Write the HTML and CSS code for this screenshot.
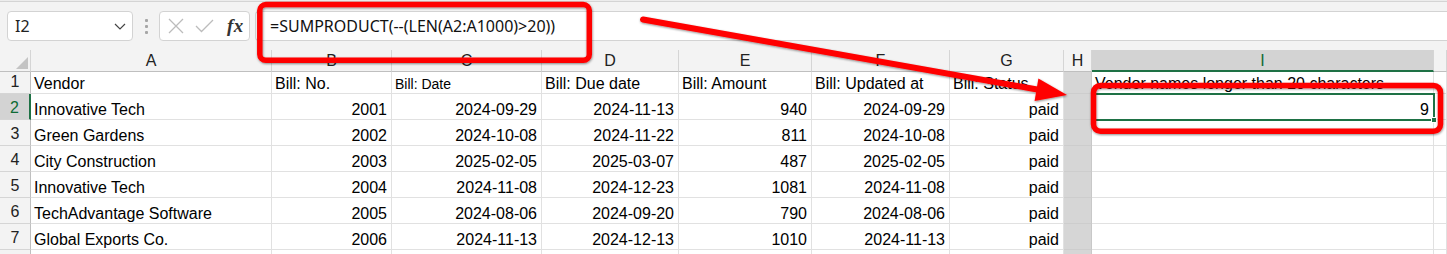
FILE: index.html
```html
<!DOCTYPE html>
<html>
<head>
<meta charset="utf-8">
<link rel="stylesheet" href="styles.css">
</head>
<body>
<div class="app">
  <div class="ribbon-edge"></div>
  <div class="fbar">
    <div class="namebox">
      <span class="ref">I2</span>
      <svg class="chev" width="12" height="7" viewBox="0 0 12 7"><path d="M1 1 L6 6 L11 1" fill="none" stroke="#444" stroke-width="1.2"/></svg>
    </div>
    <div class="grip"><i></i><i></i><i></i></div>
    <div class="fxbox">
      <svg width="16" height="16" viewBox="0 0 16 16"><path d="M1 1 L15 15 M15 1 L1 15" stroke="#bcbcbc" stroke-width="1.3" fill="none"/></svg>
      <svg width="19" height="14" viewBox="0 0 19 14"><path d="M1 7 L6.5 12.5 L18 1" stroke="#bcbcbc" stroke-width="1.3" fill="none"/></svg>
      <span class="fx">fx</span>
    </div>
    <div class="finput">=SUMPRODUCT(--(LEN(A2:A1000)&gt;20))</div>
  </div>
  <div class="sheet">
    <div class="ch corner"><span class="tri"></span></div>
    <div class="ch">A</div><div class="ch">B</div><div class="ch">C</div><div class="ch">D</div><div class="ch">E</div><div class="ch">F</div><div class="ch">G</div><div class="ch">H</div><div class="ch sel-col">I</div><div class="ch"></div>

    <div class="rh">1</div>
    <div class="c">Vendor</div><div class="c">Bill: No.</div><div class="c small">Bill: Date</div><div class="c">Bill: Due date</div><div class="c">Bill: Amount</div><div class="c">Bill: Updated at</div><div class="c">Bill: Status</div><div class="c hcol"></div><div class="c">Vendor names longer than 20 characters</div><div class="c"></div>

    <div class="rh sel-row">2</div>
    <div class="c">Innovative Tech</div><div class="c r">2001</div><div class="c r">2024-09-29</div><div class="c r">2024-11-13</div><div class="c r">940</div><div class="c r">2024-09-29</div><div class="c r">paid</div><div class="c hcol"></div><div class="c r active">9<span class="handle"></span></div><div class="c"></div>

    <div class="rh">3</div>
    <div class="c">Green Gardens</div><div class="c r">2002</div><div class="c r">2024-10-08</div><div class="c r">2024-11-22</div><div class="c r">811</div><div class="c r">2024-10-08</div><div class="c r">paid</div><div class="c hcol"></div><div class="c"></div><div class="c"></div>

    <div class="rh">4</div>
    <div class="c">City Construction</div><div class="c r">2003</div><div class="c r">2025-02-05</div><div class="c r">2025-03-07</div><div class="c r">487</div><div class="c r">2025-02-05</div><div class="c r">paid</div><div class="c hcol"></div><div class="c"></div><div class="c"></div>

    <div class="rh">5</div>
    <div class="c">Innovative Tech</div><div class="c r">2004</div><div class="c r">2024-11-08</div><div class="c r">2024-12-23</div><div class="c r">1081</div><div class="c r">2024-11-08</div><div class="c r">paid</div><div class="c hcol"></div><div class="c"></div><div class="c"></div>

    <div class="rh">6</div>
    <div class="c">TechAdvantage Software</div><div class="c r">2005</div><div class="c r">2024-08-06</div><div class="c r">2024-09-20</div><div class="c r">790</div><div class="c r">2024-08-06</div><div class="c r">paid</div><div class="c hcol"></div><div class="c"></div><div class="c"></div>

    <div class="rh">7</div>
    <div class="c">Global Exports Co.</div><div class="c r">2006</div><div class="c r">2024-11-13</div><div class="c r">2024-12-13</div><div class="c r">1010</div><div class="c r">2024-11-13</div><div class="c r">paid</div><div class="c hcol"></div><div class="c"></div><div class="c"></div>

    <div class="rh"></div>
    <div class="c"></div><div class="c"></div><div class="c"></div><div class="c"></div><div class="c"></div><div class="c"></div><div class="c"></div><div class="c hcol"></div><div class="c"></div><div class="c"></div>
  </div>

  <svg class="annot" width="1447" height="254" viewBox="0 0 1447 254">
    <defs>
      <filter id="sh" x="-5%" y="-20%" width="110%" height="140%">
        <feDropShadow dx="0.5" dy="1" stdDeviation="0.8" flood-color="#000" flood-opacity="0.45"/>
      </filter>
    </defs>
    <g filter="url(#sh)">
      <rect x="259.8" y="4.6" width="329.5" height="55.6" rx="6" fill="none" stroke="#ff0000" stroke-width="5.5"/>
      <rect x="1093.5" y="85.5" width="347" height="45.8" rx="7" fill="none" stroke="#ff0000" stroke-width="5.5"/>
      <line x1="643" y1="19.5" x2="1040" y2="90" stroke="#ff0000" stroke-width="6" stroke-linecap="round"/>
      <polygon points="1067,95 1038.4,78.5 1034.6,101" fill="#ff0000"/>
    </g>
  </svg>
</div>
</body>
</html>
```

FILE: styles.css
```css
* { box-sizing: border-box; }
html, body { margin: 0; padding: 0; background: #ffffff; }
body { width: 1447px; height: 254px; overflow: hidden; font-family: "Liberation Sans", Arial, sans-serif; font-size: 16px; color: #000; }

.app { position: relative; width: 1447px; height: 254px; overflow: hidden; }

.ribbon-edge { height: 2px; background: #ececec; border-bottom: 1px solid #d4d4d4; }

.fbar {
  height: 48px;
  background: #f3f3f3;
  display: flex;
  align-items: flex-start;
  padding-top: 9px;
}

.namebox {
  margin-left: 7px;
  width: 126px;
  height: 30px;
  background: #fff;
  border: 1px solid #d3d3d3;
  border-radius: 4px;
  display: flex;
  align-items: center;
  justify-content: space-between;
  padding: 0 6px 0 7px;
  font-family: "Noto Sans", "Open Sans", sans-serif;
  font-size: 16px;
  color: #222;
}
.chev { margin-top: 1px; }

.grip {
  width: 26px;
  display: flex;
  flex-direction: column;
  align-items: center;
  gap: 3px;
  padding-top: 8px;
}
.grip i { display: block; width: 3px; height: 3px; background: #a6a6a6; border-radius: 1px; }

.fxbox {
  width: 91px;
  height: 30px;
  background: #fff;
  border: 1px solid #d3d3d3;
  border-radius: 4px;
  display: flex;
  align-items: center;
  gap: 11px;
  padding-left: 8px;
}
.fx {
  font-family: "Liberation Serif", "Times New Roman", serif;
  font-style: italic;
  font-weight: bold;
  font-size: 19px;
  color: #333;
  margin-left: 2px;
  letter-spacing: 0.5px;
}

.finput {
  flex: 1;
  margin-left: 5px;
  height: 30px;
  background: #fff;
  border: 1px solid #d3d3d3;
  border-right: none;
  border-radius: 4px 0 0 4px;
  display: flex;
  align-items: center;
  padding-left: 14px;
  font-family: "Noto Sans", "Open Sans", sans-serif;
  font-size: 16px;
  color: #111;
}

.sheet {
  display: grid;
  grid-template-columns: 31px 241px 120px 150px 137px 133px 138px 114px 28px 342px 1fr;
  grid-template-rows: 22px 22px repeat(7, 26px);
  background: #fff;
}

.ch {
  background: #f3f3f3;
  border-right: 1px solid #d5d5d5;
  border-bottom: 1px solid #bfbfbf;
  display: flex;
  align-items: center;
  justify-content: center;
  color: #222;
  line-height: 21px;
}
.corner { position: relative; }
.tri {
  position: absolute;
  right: 2px;
  bottom: 2px;
  width: 0;
  height: 0;
  border-left: 12px solid transparent;
  border-bottom: 12px solid #c4c4c4;
}
.sel-col {
  background: #d3d3d3;
  color: #0e6b35;
  border-bottom: 2px solid #1e7145;
}

.rh {
  background: #f3f3f3;
  border-right: 1px solid #bfbfbf;
  border-bottom: 1px solid #d5d5d5;
  display: flex;
  align-items: flex-end;
  justify-content: center;
  line-height: 22px;
  color: #222;
}
.sel-row {
  background: #d3d3d3;
  color: #0e6b35;
  border-right: 2px solid #1e7145;
}

.c {
  border-right: 1px solid #e1e1e1;
  border-bottom: 1px solid #e1e1e1;
  display: flex;
  align-items: flex-end;
  padding: 0 3px 0 3px;
  line-height: 18px;
  white-space: nowrap;
  overflow: visible;
}
.c.small { font-size: 14px; }
.c.r { justify-content: flex-end; padding-right: 4px; }
.hcol { background: #d6d6d6; border-right-color: #c8c8c8; border-bottom-color: #cdcdcd; }

.active {
  position: relative;
  outline: 2px solid #1e7145;
  outline-offset: -1px;
}
.handle {
  position: absolute;
  right: -4px;
  bottom: -4px;
  width: 6px;
  height: 6px;
  background: #1e7145;
  border: 1px solid #fff;
}

.annot { position: absolute; left: 0; top: 0; pointer-events: none; }
```
